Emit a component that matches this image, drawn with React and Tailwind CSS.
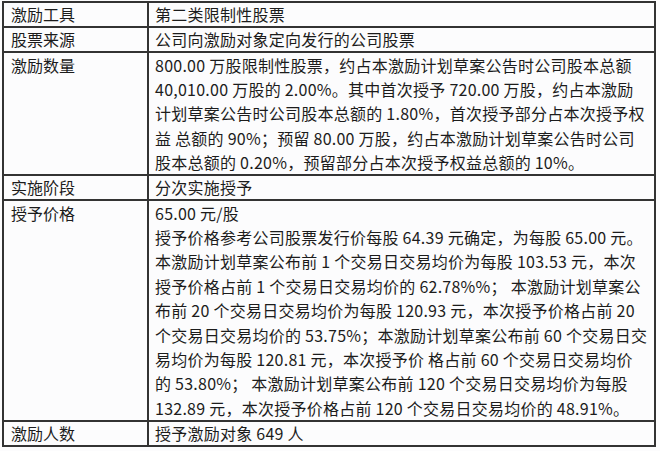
const rows = [
  { label: "激励工具", lead: "leading-[23px]", lines: ["第二类限制性股票"] },
  { label: "股票来源", lead: "leading-[23px]", lines: ["公司向激励对象定向发行的公司股票"] },
  {
    label: "激励数量",
    lead: "leading-[24.2px]",
    lines: [
      "800.00 万股限制性股票，约占本激励计划草案公告时公司股本总额",
      "40,010.00 万股的 2.00%。其中首次授予 720.00 万股，约占本激励",
      "计划草案公告时公司股本总额的 1.80%，首次授予部分占本次授予权",
      "益 总额的 90%；预留 80.00 万股，约占本激励计划草案公告时公司",
      "股本总额的 0.20%，预留部分占本次授予权益总额的 10%。",
    ],
  },
  { label: "实施阶段", lead: "leading-[22.5px]", lines: ["分次实施授予"] },
  {
    label: "授予价格",
    lead: "leading-[24.4px]",
    lines: [
      "65.00 元/股",
      "授予价格参考公司股票发行价每股 64.39 元确定，为每股 65.00 元。",
      "本激励计划草案公布前 1 个交易日交易均价为每股 103.53 元，本次",
      "授予价格占前 1 个交易日交易均价的 62.78%%； 本激励计划草案公",
      "布前 20 个交易日交易均价为每股 120.93 元，本次授予价格占前 20",
      "个交易日交易均价的 53.75%；本激励计划草案公布前 60 个交易日交",
      "易均价为每股 120.81 元，本次授予价 格占前 60 个交易日交易均价",
      "的 53.80%； 本激励计划草案公布前 120 个交易日交易均价为每股",
      "132.89 元，本次授予价格占前 120 个交易日交易均价的 48.91%。",
    ],
  },
  { label: "激励人数", lead: "leading-[22.5px]", lines: ["授予激励对象 649 人"] },
];

export default function App() {
  return (
    <div
      className="h-[451px] w-[660px] overflow-hidden bg-[#fcfcfd] pl-[2px] pt-[1px] text-[16px] text-[#1c1c1c]"
      style={{ fontFamily: '"Noto Sans CJK SC", "Noto Sans", sans-serif' }}
    >
      <table className="w-[654px] table-fixed border-collapse">
        <colgroup>
          <col className="w-[145px]" />
          <col />
        </colgroup>
        <tbody>
          {rows.map((r) => (
            <tr key={r.label} className={r.lead}>
              <td className="border-2 border-[#333] pl-[7px] align-top">{r.label}</td>
              <td className="border-2 border-[#333] pl-[6px] align-top">
                {r.lines.map((l, i) => (
                  <div key={i} className="whitespace-pre tracking-[0.25px]">
                    {l}
                  </div>
                ))}
              </td>
            </tr>
          ))}
        </tbody>
      </table>
    </div>
  );
}
